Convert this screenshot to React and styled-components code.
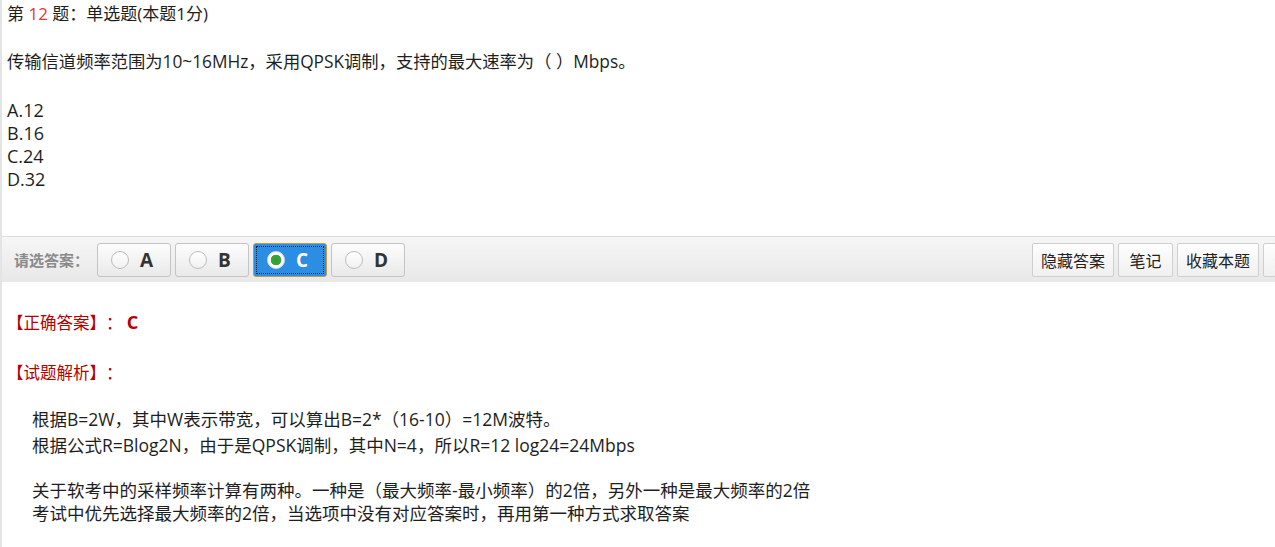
import React from 'react'
import styled, { createGlobalStyle } from 'styled-components'

const GlobalStyle = createGlobalStyle`
  html, body {
    margin: 0;
    padding: 0;
    background: #fff;
    overflow: hidden;
  }
  body {
    font-family: 'Segoe UI', 'Open Sans', 'Noto Sans CJK SC', sans-serif;
    text-spacing-trim: space-all;
  }
`

const options = [
  { key: 'A', text: '12' },
  { key: 'B', text: '16' },
  { key: 'C', text: '24' },
  { key: 'D', text: '32' },
]

const tools = ['隐藏答案', '笔记', '收藏本题', '纠错']

const App = () => {
  const selected = 'C'

  return (
    <Page>
      <GlobalStyle />
      <Question>
        <Title>
          第 <Num>12</Num> 题：单选题(本题1分)
        </Title>
        <Stem>传输信道频率范围为10~16MHz，采用QPSK调制，支持的最大速率为（ ）Mbps。</Stem>
        <OptionList>
          {options.map((o) => (
            <li key={o.key}>
              {o.key}.{o.text}
            </li>
          ))}
        </OptionList>
      </Question>

      <Toolbar>
        <Label>请选答案：</Label>
        <Choices>
          {options.map((o) => (
            <Choice key={o.key} $active={o.key === selected}>
              <Radio $active={o.key === selected} />
              <span>{o.key}</span>
            </Choice>
          ))}
        </Choices>
        <Tools>
          {tools.map((t) => (
            <ToolButton key={t}>{t}</ToolButton>
          ))}
        </Tools>
      </Toolbar>

      <Answer>
        <Heading>
          【正确答案】： <strong>C</strong>
        </Heading>
        <Heading className='analysis'>【试题解析】：</Heading>
        <Explain>
          <p>根据B=2W，其中W表示带宽，可以算出B=2*（16-10）=12M波特。</p>
          <p>根据公式R=Blog2N，由于是QPSK调制，其中N=4，所以R=12 log24=24Mbps</p>
        </Explain>
        <Explain className='second'>
          <p>关于软考中的采样频率计算有两种。一种是（最大频率-最小频率）的2倍，另外一种是最大频率的2倍</p>
          <p>考试中优先选择最大频率的2倍，当选项中没有对应答案时，再用第一种方式求取答案</p>
        </Explain>
      </Answer>
    </Page>
  )
}

export default App

const Page = styled.div`
  width: 1320px;
  min-height: 547px;
  border-left: 2px solid #e4e4e4;
  color: #1e1e1e;
`

const Question = styled.div`
  padding: 0 0 45px 5px;
`

const Title = styled.div`
  font-size: 17px;
  line-height: 28px;
`

const Num = styled.span`
  color: #e53935;
`

const Stem = styled.div`
  margin-top: 20px;
  font-size: 17.3px;
  line-height: 28px;
`

const OptionList = styled.ul`
  list-style: none;
  margin: 23px 0 0;
  padding: 0;
  font-size: 18px;
  line-height: 23px;
`

const Toolbar = styled.div`
  display: flex;
  align-items: center;
  height: 45px;
  padding: 0 4px 0 12px;
  border-top: 1px solid #dcdcdc;
  background: linear-gradient(#f6f6f6, #e8e8e8);
`

const Label = styled.span`
  font-size: 15px;
  font-weight: bold;
  color: #8a8a8a;
  margin-right: 8px;
`

const Choices = styled.div`
  display: flex;
  gap: 4px;
`

const Choice = styled.div`
  box-sizing: border-box;
  width: 74px;
  height: 34px;
  display: flex;
  align-items: center;
  gap: 11px;
  padding-left: 13px;
  border-radius: 3px;
  border: 1px solid ${(p) => (p.$active ? '#c79a3c' : '#c4c4c4')};
  background: ${(p) => (p.$active ? '#2c8ee3' : 'linear-gradient(#fdfdfd, #e9e9e9)')};
  outline: ${(p) => (p.$active ? '1px dotted #1a1a1a' : 'none')};
  outline-offset: -4px;
  font-family: 'Open Sans', 'Noto Sans', sans-serif;
  font-size: 19px;
  font-weight: bold;
  color: ${(p) => (p.$active ? '#fff' : '#333')};
`

const Radio = styled.span`
  box-sizing: border-box;
  width: 18px;
  height: 18px;
  border-radius: 50%;
  border: 1px solid ${(p) => (p.$active ? '#ddd' : '#bdbdbd')};
  background: ${(p) =>
    p.$active
      ? 'radial-gradient(circle, #2f9e2f 0, #3aa83a 5px, #fff 5.5px)'
      : 'linear-gradient(#fff, #f1f1f1)'};
`

const Tools = styled.div`
  display: flex;
  gap: 4px;
  margin-left: auto;
`

const ToolButton = styled.div`
  box-sizing: border-box;
  height: 34px;
  min-width: 55px;
  padding: 0 8px;
  display: flex;
  align-items: center;
  justify-content: center;
  border: 1px solid #cfcfcf;
  border-radius: 2px;
  background: linear-gradient(#fefefe, #f0f0f0);
  font-size: 16px;
  color: #222;
`

const Answer = styled.div`
  padding: 28px 0 0 5px;
`

const Heading = styled.div`
  font-size: 16.5px;
  line-height: 24px;
  color: #b50000;

  strong {
    font-size: 18px;
  }

  &.analysis {
    margin-top: 26px;
  }
`

const Explain = styled.div`
  padding-left: 25px;
  margin-top: 21px;
  font-size: 17.5px;

  p {
    margin: 0;
    line-height: 26px;
  }

  &.second {
    margin-top: 21px;

    p {
      line-height: 23px;
    }
  }
`
